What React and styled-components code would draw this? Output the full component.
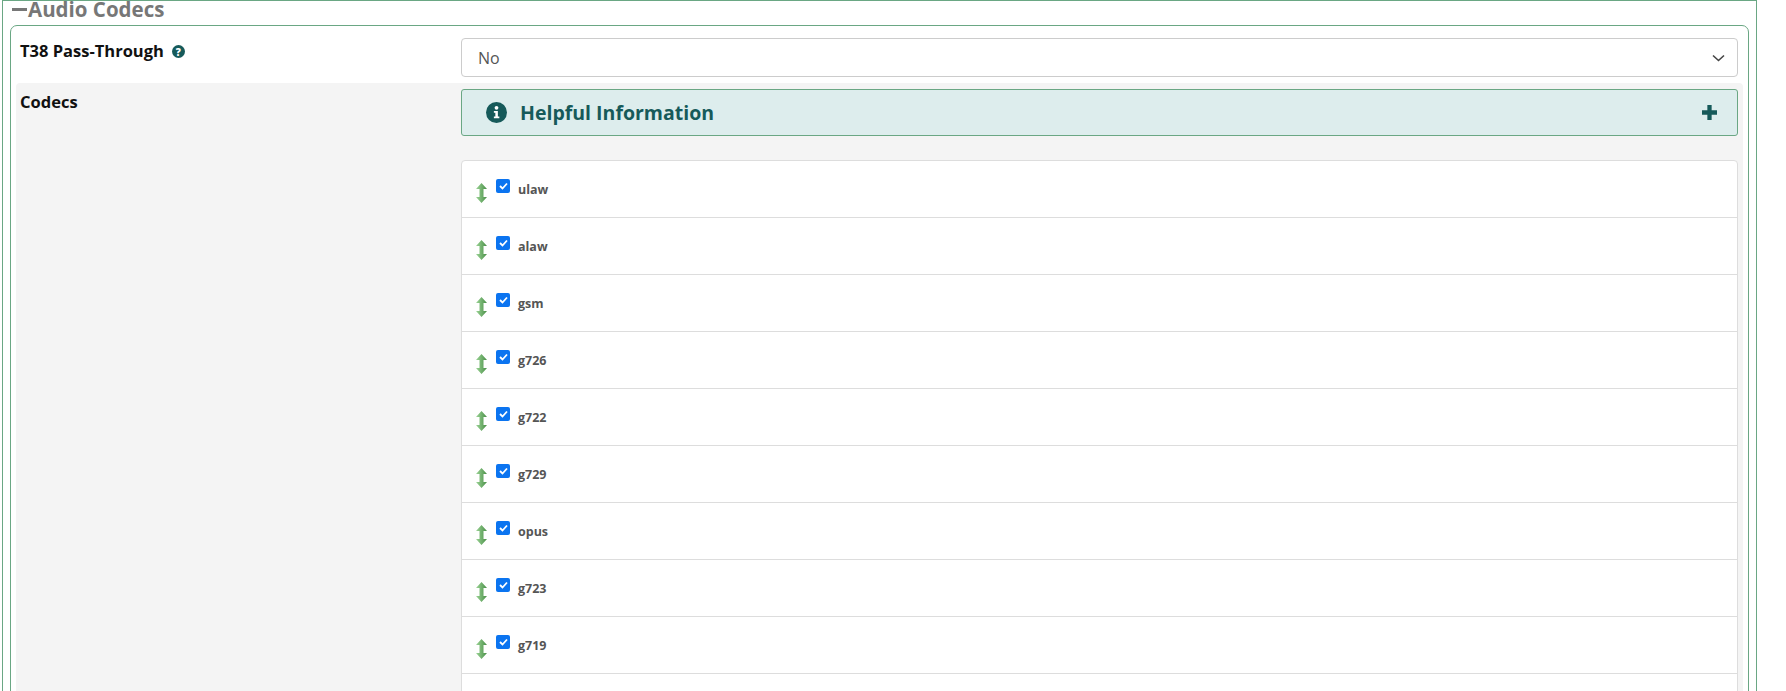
import React from "react";
import styled, { createGlobalStyle } from "styled-components";

const Global = createGlobalStyle`
  html, body { margin: 0; background: #fff; font-family: "Open Sans", "Liberation Sans", sans-serif; overflow: hidden; }
`;

const codecs = ["ulaw", "alaw", "gsm", "g726", "g722", "g729", "opus", "g723", "g719", "g728"];

const Outer = styled.div`
  margin-left: 2px;
  width: 1755px;
  height: 700px;
  border: 1px solid #6aa784;
  border-bottom: none;
  box-sizing: border-box;
  padding: 0 7px;
`;

const Title = styled.div`
  display: flex;
  align-items: center;
  height: 22px;
  margin-top: -3px;
  margin-left: 2px;
  font-size: 20.5px;
  font-weight: 700;
  color: #777;
  span.dash {
    display: inline-block;
    width: 15px;
    height: 3px;
    background: #777;
    margin-right: 1px;
  }
`;

const Inner = styled.div`
  margin-top: 5px;
  border: 1px solid #6aa784;
  border-radius: 7px;
  padding: 12px 10px 0 5px;
  height: 680px;
`;

const Row = styled.div`
  display: grid;
  grid-template-columns: 445px 1fr;
  background: ${(p) => (p.$gray ? "#f4f4f4" : "#fff")};
  padding: ${(p) => (p.$gray ? "6px 5px 0 0" : "0 0 6px 0")};
  margin-right: ${(p) => (p.$gray ? "-5px" : "0")};
  border-radius: 4px;
`;

const Label = styled.div`
  padding: 1px 0 0 4px;
  font-size: 16.5px;
  font-weight: 700;
  color: #111;
  display: flex;
  align-items: flex-start;
  gap: 8px;
`;

const Help = styled.span`
  display: inline-flex;
  align-items: center;
  justify-content: center;
  margin-top: 6px;
  width: 13px;
  height: 13px;
  border-radius: 50%;
  background: #165a5a;
  color: #fff;
  font-size: 10px;
  font-weight: 800;
`;

const Select = styled.div`
  height: 37px;
  border: 1px solid #ccc;
  border-radius: 4px;
  display: flex;
  align-items: center;
  justify-content: space-between;
  padding: 0 12px 0 16px;
  font-size: 16px;
  color: #555;
`;

const InfoBox = styled.div`
  height: 45px;
  border: 1px solid #6aa784;
  border-radius: 3px;
  background: #ddeded;
  display: flex;
  align-items: center;
  justify-content: space-between;
  padding: 0 20px 0 24px;
  color: #165a5a;
  font-size: 19.5px;
  font-weight: 700;
  div { display: flex; align-items: center; gap: 13px; }
`;

const List = styled.div`
  margin-top: 24px;
  border: 1px solid #ddd;
  border-radius: 4px;
  background: #fff;
`;

const Item = styled.div`
  height: 56px;
  border-top: ${(p) => (p.$first ? "none" : "1px solid #ddd")};
  display: flex;
  align-items: center;
  padding-left: 14px;
  font-size: 12.5px;
  font-weight: 700;
  color: #555;
`;

const Arrow = styled.svg`
  margin-top: 8px;
  margin-right: 9px;
`;

const Check = styled.span`
  width: 14px;
  height: 14px;
  border-radius: 2px;
  background: #0b74f0;
  display: inline-flex;
  align-items: center;
  justify-content: center;
  margin-right: 8px;
  margin-top: -6px;
`;

const UpDown = () => (
  <Arrow width="11" height="20" viewBox="0 0 11 20">
    <defs>
      <linearGradient id="g" x1="0" x2="1">
        <stop offset="0" stopColor="#9bd495" />
        <stop offset="1" stopColor="#4a8f48" />
      </linearGradient>
    </defs>
    <path d="M5.5 0 L11 6 L7.5 6 L7.5 14 L11 14 L5.5 20 L0 14 L3.5 14 L3.5 6 L0 6 Z" fill="url(#g)" />
  </Arrow>
);

export default function App() {
  return (
    <>
      <Global />
      <Outer>
        <Title><span className="dash" />Audio Codecs</Title>
        <Inner>
          <Row>
            <Label>T38 Pass-Through <Help>?</Help></Label>
            <Select>
              No
              <svg width="13" height="8" viewBox="0 0 13 8"><path d="M1 1.5 L6.5 6.5 L12 1.5" stroke="#444" strokeWidth="1.6" fill="none" /></svg>
            </Select>
          </Row>
          <Row $gray>
            <Label>Codecs</Label>
            <div>
              <InfoBox>
                <div>
                  <svg width="21" height="21" viewBox="0 0 20 20">
                    <circle cx="10" cy="10" r="10" fill="#165a5a" />
                    <circle cx="10" cy="5.5" r="1.8" fill="#fff" />
                    <path d="M7.5 8.5 H11.3 V13.8 H12.7 V15.5 H7.5 V13.8 H8.9 V10.2 H7.5 Z" fill="#fff" />
                  </svg>
                  Helpful Information
                </div>
                <svg width="15" height="15" viewBox="0 0 14 14"><path d="M5 0H9V5H14V9H9V14H5V9H0V5H5Z" fill="#165a5a" /></svg>
              </InfoBox>
              <List>
                {codecs.map((c, i) => (
                  <Item key={c} $first={i === 0}>
                    <UpDown />
                    <Check>
                      <svg width="9" height="8" viewBox="0 0 9 8"><path d="M1 4 L3.5 6.5 L8 1.5" stroke="#fff" strokeWidth="1.8" fill="none" /></svg>
                    </Check>
                    {c}
                  </Item>
                ))}
              </List>
            </div>
          </Row>
        </Inner>
      </Outer>
    </>
  );
}
